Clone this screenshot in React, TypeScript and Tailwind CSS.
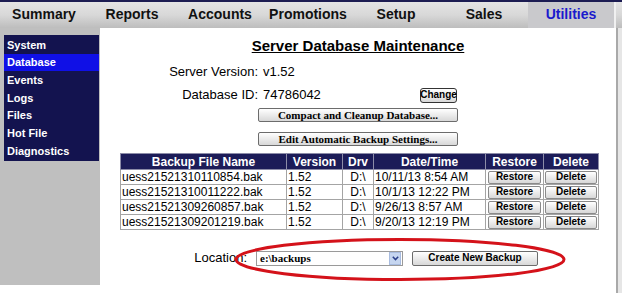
const TABS = ['Summary', 'Reports', 'Accounts', 'Promotions', 'Setup', 'Sales', 'Utilities'];
const SIDE = ['System', 'Database', 'Events', 'Logs', 'Files', 'Hot File', 'Diagnostics'];

const BACKUPS = [
  { file: 'uess21521310110854.bak', ver: '1.52', drv: 'D:\\', date: '10/11/13 8:54 AM' },
  { file: 'uess21521310011222.bak', ver: '1.52', drv: 'D:\\', date: '10/1/13 12:22 PM' },
  { file: 'uess21521309260857.bak', ver: '1.52', drv: 'D:\\', date: '9/26/13 8:57 AM' },
  { file: 'uess21521309201219.bak', ver: '1.52', drv: 'D:\\', date: '9/20/13 12:19 PM' },
];

// old-school grey bevel button
const btn =
  'flex items-center justify-center bg-gradient-to-b from-white to-[#d8d8d8] border border-[#6c6c6c] rounded-[2px] text-black font-bold leading-none';

export default function App() {
  return (
    <div className="relative w-[622px] h-[293px] overflow-hidden bg-white text-black font-['Liberation_Sans',Arial,sans-serif]">
      {/* Top tab bar */}
      <div className="h-[28px] flex border-t-2 border-[#1c1c52] bg-gradient-to-b from-[#e4e4e4] via-[#d8d8d8] to-[#bdbdbd]">
        {TABS.map((t) => (
          <div
            key={t}
            className={`w-[88px] shrink-0 flex items-center justify-center text-[14px] font-bold pb-[2px] ${
              t === 'Utilities' ? 'bg-[#c9c9cc] text-[#1a1acc] border-r-2 border-[#f0f0f0]' : 'text-[#111]'
            }`}
          >
            {t}
          </div>
        ))}
      </div>

      <div className="flex">
        {/* Left menu */}
        <div className="w-[100px] shrink-0 h-[257px] bg-[#bfbfbf] pt-[7px] pl-[4px] pr-[1px]">
          <div className="bg-[#13134f] py-[1px]">
            {SIDE.map((s) => (
              <div
                key={s}
                className={`h-[17.7px] flex items-center pl-[3px] text-[11px] font-bold text-white ${
                  s === 'Database' ? 'bg-[#1010e6]' : ''
                }`}
              >
                {s}
              </div>
            ))}
          </div>
        </div>

        {/* Main panel */}
        <div className="w-[518px] h-[265px] bg-white border-r-2 border-[#a9a9a9] shrink-0">
          <div className="pt-[9px] text-center text-[15px] leading-[17px] font-bold underline">
            Server Database Maintenance
          </div>

          <div className="mt-[10px] flex items-center h-[16px] text-[13px]">
            <div className="w-[158px] text-right">Server Version:</div>
            <div className="ml-[5px]">v1.52</div>
          </div>
          <div className="mt-[7px] flex items-center h-[16px] text-[13px]">
            <div className="w-[158px] text-right">Database ID:</div>
            <div className="ml-[5px] w-[157px]">74786042</div>
            <div className={`${btn} w-[37px] h-[15px] text-[10px] border-[#333] rounded-[3px]`}>Change</div>
          </div>

          <div className={`${btn} mt-[5px] mx-auto w-[200px] h-[14px] text-[11px] font-['Liberation_Serif',serif]`}>
            Compact and Cleanup Database...
          </div>
          <div className={`${btn} mt-[10px] mx-auto w-[200px] h-[14px] text-[11px] font-['Liberation_Serif',serif]`}>
            Edit Automatic Backup Settings...
          </div>

          <table className="mt-[7px] mx-[20px] w-[478px] border-collapse border border-[#9a9a9a] text-[12px] table-fixed">
            <colgroup>
              <col className="w-[166px]" />
              <col className="w-[56px]" />
              <col className="w-[31px]" />
              <col className="w-[112px]" />
              <col className="w-[58px]" />
              <col className="w-[55px]" />
            </colgroup>
            <thead>
              <tr className="h-[16px] bg-[#1c1c58] text-white font-bold leading-none">
                {['Backup File Name', 'Version', 'Drv', 'Date/Time', 'Restore', 'Delete'].map((h) => (
                  <th key={h} className="border border-[#8c8ca8] p-0 text-center font-bold text-[12px]">
                    {h}
                  </th>
                ))}
              </tr>
            </thead>
            <tbody>
              {BACKUPS.map((b) => (
                <tr key={b.file} className="h-[15px] leading-none">
                  <td className="border border-[#a4a4a4] px-[1px] py-0 whitespace-nowrap">{b.file}</td>
                  <td className="border border-[#a4a4a4] px-[1px] py-0">{b.ver}</td>
                  <td className="border border-[#a4a4a4] p-0 text-center">{b.drv}</td>
                  <td className="border border-[#a4a4a4] px-[1px] py-0 whitespace-nowrap">{b.date}</td>
                  <td className="border border-[#a4a4a4] p-0">
                    <div className={`${btn} mx-auto w-[53px] h-[13px] text-[10px] border-[#8a8a8a]`}>Restore</div>
                  </td>
                  <td className="border border-[#a4a4a4] p-0">
                    <div className={`${btn} mx-auto w-[52px] h-[13px] text-[10px] border-[#8a8a8a]`}>Delete</div>
                  </td>
                </tr>
              ))}
            </tbody>
          </table>

          <div className="mt-[20px] flex items-center h-[16px] text-[13px]">
            <div className="w-[147px] text-right">Location:</div>
            <div className="ml-[9px] w-[147px] h-[15px] flex items-center border border-[#9a9a9a] bg-white">
              <span className="flex-1 pl-[3px] text-[11px] font-bold font-['Liberation_Serif',serif] leading-none">
                e:\backups
              </span>
              <span className="w-[12px] h-[13px] mr-[1px] flex items-center justify-center bg-[#c6d6f0] border border-[#a8bce0]">
                <svg width="7" height="5" viewBox="0 0 7 5">
                  <path d="M0.8 0.8 L3.5 3.6 L6.2 0.8" fill="none" stroke="#2a3f8a" strokeWidth="1.5" />
                </svg>
              </span>
            </div>
            <div className={`${btn} ml-[9px] w-[126px] h-[15px] text-[10px]`}>Create New Backup</div>
          </div>
        </div>
        <div className="flex-1 h-[265px] bg-[#e6e6e6]" />
      </div>

      {/* red annotation ellipse drawn over the location row */}
      <svg className="absolute left-[233px] top-[236px]" width="334" height="48" viewBox="0 0 334 48">
        <ellipse cx="167" cy="23.5" rx="164" ry="20" fill="none" stroke="#d4121a" strokeWidth="3" />
      </svg>
    </div>
  );
}
